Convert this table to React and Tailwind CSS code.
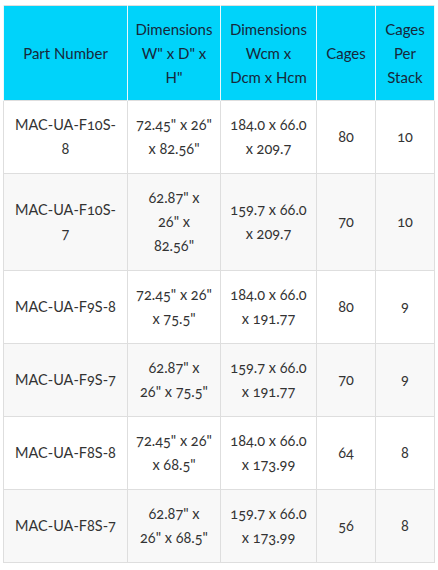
import React from "react";

const rows = [
  ["MAC-UA-F10S-\n8", "72.45\" x 26\"\nx 82.56\"", "184.0 x 66.0\nx 209.7", "80", "10"],
  ["MAC-UA-F10S-\n7", "62.87\" x\n26\" x\n82.56\"", "159.7 x 66.0\nx 209.7", "70", "10"],
  ["MAC-UA-F9S-8", "72.45\" x 26\"\nx 75.5\"", "184.0 x 66.0\nx 191.77", "80", "9"],
  ["MAC-UA-F9S-7", "62.87\" x\n26\" x 75.5\"", "159.7 x 66.0\nx 191.77", "70", "9"],
  ["MAC-UA-F8S-8", "72.45\" x 26\"\nx 68.5\"", "184.0 x 66.0\nx 173.99", "64", "8"],
  ["MAC-UA-F8S-7", "62.87\" x\n26\" x 68.5\"", "159.7 x 66.0\nx 173.99", "56", "8"],
];

const headers = [
  "Part Number",
  "Dimensions\nW\" x D\" x\nH\"",
  "Dimensions\nWcm x\nDcm x Hcm",
  "Cages",
  "Cages\nPer\nStack",
];

const App = () => {
  return (
    <div className="w-[438px] h-[570px] bg-white pl-[3px] pt-[5px] font-['Lato','Open_Sans',sans-serif]">
      <table className="w-[431px] table-fixed border-collapse border border-[#dedede] oldstyle-nums">
        <colgroup>
          <col className="w-[124px]" />
          <col className="w-[93px]" />
          <col className="w-[96px]" />
          <col className="w-[59px]" />
          <col className="w-[59px]" />
        </colgroup>
        <thead>
          <tr className="bg-[#00d3fa] h-[94px]">
            {headers.map((h, i) => (
              <th
                key={i}
                className="border-x border-[#e8f9fd] px-1 py-[11px] text-[15px] leading-[24px] font-normal text-[#17283a] whitespace-pre-line text-center align-middle"
              >
                {h}
              </th>
            ))}
          </tr>
        </thead>
        <tbody>
          {rows.map((r, i) => (
            <tr key={i} className={i % 2 === 1 ? "bg-[#f8f8f8]" : "bg-white"}>
              {r.map((c, j) => (
                <td
                  key={j}
                  className="border border-[#dedede] px-1 py-3 text-[14.5px] leading-[24px] text-[#333] whitespace-pre-line text-center align-middle"
                >
                  {c}
                </td>
              ))}
            </tr>
          ))}
        </tbody>
      </table>
    </div>
  );
};

export default App;
